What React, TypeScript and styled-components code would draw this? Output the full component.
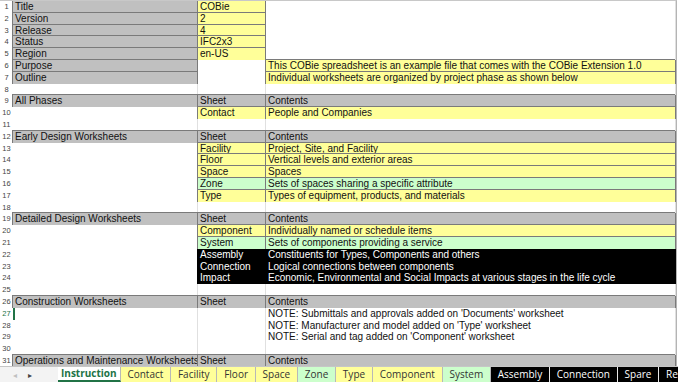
import React from "react";
import styled, { createGlobalStyle } from "styled-components";

type Fill = "gray" | "yellow" | "green" | "black" | "none";
type Cell = { text?: string; fill?: Fill };
type RowData = { a?: Cell; b?: Cell; c?: Cell };

const g = (text: string): Cell => ({ text, fill: "gray" });
const y = (text: string): Cell => ({ text, fill: "yellow" });
const gr = (text: string): Cell => ({ text, fill: "green" });
const bk = (text: string): Cell => ({ text, fill: "black" });

const header = (title: string): RowData => ({ a: g(title), b: g("Sheet"), c: g("Contents") });

const rows: RowData[] = [
  { a: g("Title"), b: y("COBie") },
  { a: g("Version"), b: y("2") },
  { a: g("Release"), b: y("4") },
  { a: g("Status"), b: y("IFC2x3") },
  { a: g("Region"), b: y("en-US") },
  { a: g("Purpose"), c: y("This COBie spreadsheet is an example file that comes with the COBie Extension 1.0") },
  { a: g("Outline"), c: y("Individual worksheets are organized by project phase as shown below") },
  {},
  header("All Phases"),
  { b: y("Contact"), c: y("People and Companies") },
  {},
  header("Early Design Worksheets"),
  { b: y("Facility"), c: y("Project, Site, and Facility") },
  { b: y("Floor"), c: y("Vertical levels and exterior areas") },
  { b: y("Space"), c: y("Spaces") },
  { b: gr("Zone"), c: gr("Sets of spaces sharing a specific attribute") },
  { b: y("Type"), c: y("Types of equipment, products, and materials") },
  {},
  header("Detailed Design Worksheets"),
  { b: y("Component"), c: y("Individually named or schedule items") },
  { b: gr("System"), c: gr("Sets of components providing a service") },
  { b: bk("Assembly"), c: bk("Constituents for Types, Components and others") },
  { b: bk("Connection"), c: bk("Logical connections between components") },
  { b: bk("Impact"), c: bk("Economic, Environmental and Social Impacts at various stages in the life cycle") },
  {},
  header("Construction Worksheets"),
  { c: { text: "NOTE: Submittals and approvals added on 'Documents' worksheet" } },
  { c: { text: "NOTE: Manufacturer and model added on 'Type' worksheet" } },
  { c: { text: "NOTE: Serial and tag added on 'Component' worksheet" } },
  {},
  header("Operations and Maintenance Worksheets"),
];

type TabKind = "active" | "yellow" | "green" | "black";
const tabs: { name: string; kind: TabKind }[] = [
  { name: "Instruction", kind: "active" },
  { name: "Contact", kind: "yellow" },
  { name: "Facility", kind: "yellow" },
  { name: "Floor", kind: "yellow" },
  { name: "Space", kind: "yellow" },
  { name: "Zone", kind: "green" },
  { name: "Type", kind: "yellow" },
  { name: "Component", kind: "yellow" },
  { name: "System", kind: "green" },
  { name: "Assembly", kind: "black" },
  { name: "Connection", kind: "black" },
  { name: "Spare", kind: "black" },
  { name: "Resource", kind: "black" },
];

const SELECTED_ROW = 27;

const fillBg: Record<Fill, string> = {
  gray: "#c0c0c0",
  yellow: "#ffff99",
  green: "#ccffcc",
  black: "#000000",
  none: "#ffffff",
};

const GlobalStyle = createGlobalStyle`
  html, body {
    margin: 0;
    padding: 0;
    background: #ffffff;
    overflow: hidden;
  }
  * { box-sizing: border-box; }
`;

export default function App() {
  return (
    <>
      <GlobalStyle />
      <Sheet>
        <Grid>
          {rows.map((r, i) => {
            const num = i + 1;
            return (
              <Row key={num}>
                <RowNum $selected={num === SELECTED_ROW}>{num}</RowNum>
                {(["a", "b", "c"] as const).map((col) => {
                  const cell = r[col] || {};
                  const fill = cell.fill || "none";
                  return (
                    <CellBox
                      key={col}
                      $fill={fill}
                      $selected={col === "a" && num === SELECTED_ROW}
                    >
                      {cell.text}
                    </CellBox>
                  );
                })}
              </Row>
            );
          })}
        </Grid>
        <TabBar>
          <Nav>
            <Arrow $dim>&#9666;</Arrow>
            <Arrow>&#9656;</Arrow>
          </Nav>
          <Tabs>
            {tabs.map((t) => (
              <Tab key={t.name} $kind={t.kind}>
                {t.name}
              </Tab>
            ))}
          </Tabs>
        </TabBar>
      </Sheet>
    </>
  );
}

const Sheet = styled.div`
  width: 678px;
  height: 382px;
  display: flex;
  flex-direction: column;
  overflow: hidden;
  background: #ffffff;
`;

const Grid = styled.div`
  flex: 1;
  overflow: hidden;
  width: 677px;
  border-top: 1px solid #c8c8c8;
  border-right: 1px solid #b4b4b4;
`;

const Row = styled.div`
  display: grid;
  grid-template-columns: 13px 185px 68px 410px;
  height: 11.8px;
`;

const RowNum = styled.div<{ $selected?: boolean }>`
  font-family: "Liberation Sans", Arial, sans-serif;
  font-size: 7.5px;
  line-height: 11.8px;
  text-align: center;
  color: ${(p) => (p.$selected ? "#217346" : "#444444")};
  background: #ffffff;
  border-bottom: 1px solid #e4e4e4;
`;

const CellBox = styled.div<{ $fill: Fill; $selected?: boolean }>`
  font-family: "Liberation Sans", Arial, sans-serif;
  font-size: 10px;
  line-height: 11.5px;
  padding-left: 2px;
  white-space: nowrap;
  overflow: visible;
  background: ${(p) => fillBg[p.$fill]};
  color: ${(p) => (p.$fill === "black" ? "#ffffff" : "#111111")};
  border-right: 1px solid
    ${(p) => (p.$fill === "none" ? "#e0e0e0" : p.$fill === "black" ? "#000" : "#7a7a7a")};
  border-bottom: 1px solid
    ${(p) => (p.$fill === "none" ? "#e0e0e0" : p.$fill === "black" ? "#000" : "#7a7a7a")};
  box-shadow: ${(p) =>
    p.$selected
      ? "inset 2px 0 0 #217346"
      : p.$fill === "none"
      ? "none"
      : p.$fill === "black"
      ? "-1px 0 0 #000"
      : "-1px -1px 0 #7a7a7a"};
  position: relative;
`;

const TabBar = styled.div`
  height: 16px;
  display: flex;
  align-items: stretch;
  background: #f3f3f3;
  border-top: 1px solid #c6c6c6;
  font-family: "Open Sans", "Noto Sans", sans-serif;
`;

const Nav = styled.div`
  flex: none;
  width: 58px;
  display: flex;
  align-items: center;
  gap: 11px;
  padding-left: 13px;
`;

const Arrow = styled.span<{ $dim?: boolean }>`
  font-size: 8px;
  color: ${(p) => (p.$dim ? "#c0c0c0" : "#444444")};
`;

const Tabs = styled.div`
  flex: 1;
  min-width: 0;
  display: flex;
  overflow: hidden;
`;

const tabBg: Record<TabKind, string> = {
  active: "#ffffff",
  yellow: "#ffff99",
  green: "#ccffcc",
  black: "#000000",
};

const Tab = styled.div<{ $kind: TabKind }>`
  flex: none;
  padding: 0 ${(p) => (p.$kind === "active" ? "3px" : "6.8px")};
  font-size: 10px;
  line-height: 14px;
  white-space: nowrap;
  background: ${(p) => tabBg[p.$kind]};
  color: ${(p) => (p.$kind === "active" ? "#217346" : p.$kind === "black" ? "#ffffff" : "#333333")};
  font-weight: ${(p) => (p.$kind === "active" ? 700 : 400)};
  border-right: 1px solid ${(p) => (p.$kind === "black" ? "#e8e8e8" : "#b8b8b8")};
  border-bottom: ${(p) => (p.$kind === "active" ? "2px solid #217346" : "none")};
  margin-top: ${(p) => (p.$kind === "active" ? "-1px" : "0")};
`;
